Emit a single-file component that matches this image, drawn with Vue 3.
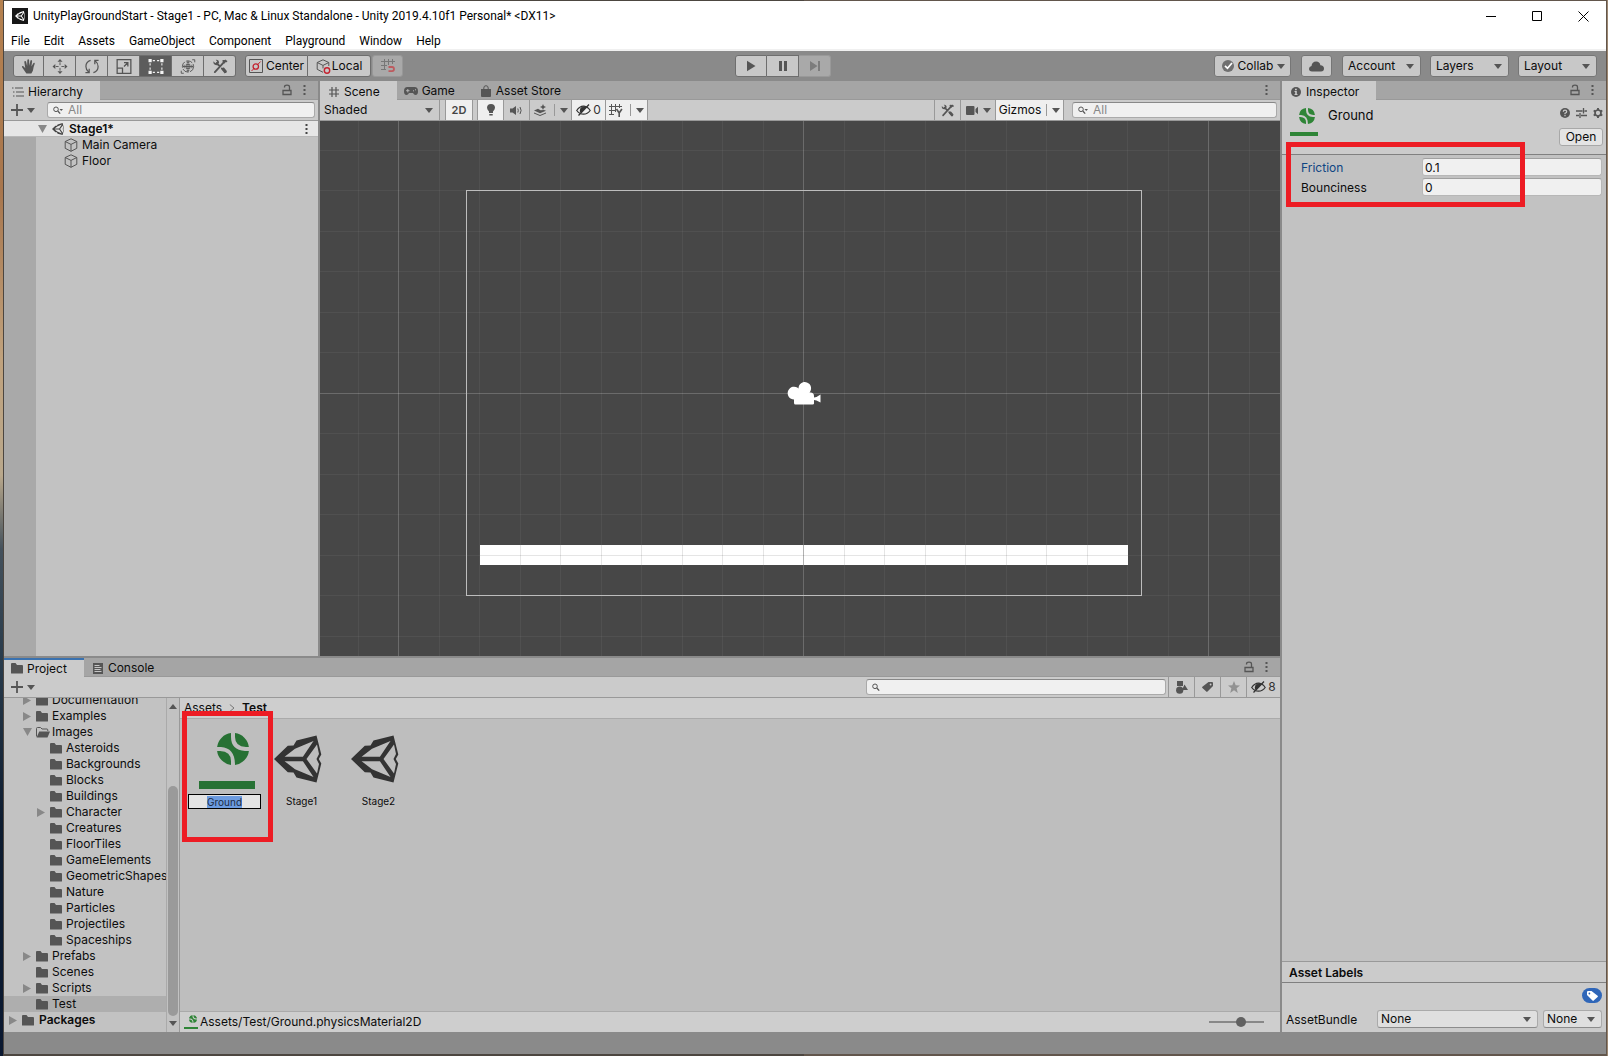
<script setup>
import { onMounted, ref } from 'vue'

const menus = ['File', 'Edit', 'Assets', 'GameObject', 'Component', 'Playground', 'Window', 'Help']

const transformTools = [
  { id: 'hand', label: 'Hand tool' },
  { id: 'move', label: 'Move tool' },
  { id: 'rotate', label: 'Rotate tool' },
  { id: 'scale', label: 'Scale tool' },
  { id: 'rect', label: 'Rect tool', active: true },
  { id: 'transform', label: 'Transform tool' },
  { id: 'tools', label: 'Custom tools' },
]

const tree = [
  { name: 'Documentation', level: 1, fold: 'closed' },
  { name: 'Examples', level: 1, fold: 'closed' },
  { name: 'Images', level: 1, fold: 'open' },
  { name: 'Asteroids', level: 2 },
  { name: 'Backgrounds', level: 2 },
  { name: 'Blocks', level: 2 },
  { name: 'Buildings', level: 2 },
  { name: 'Character', level: 2, fold: 'closed' },
  { name: 'Creatures', level: 2 },
  { name: 'FloorTiles', level: 2 },
  { name: 'GameElements', level: 2 },
  { name: 'GeometricShapes', level: 2 },
  { name: 'Nature', level: 2 },
  { name: 'Particles', level: 2 },
  { name: 'Projectiles', level: 2 },
  { name: 'Spaceships', level: 2 },
  { name: 'Prefabs', level: 1, fold: 'closed' },
  { name: 'Scenes', level: 1 },
  { name: 'Scripts', level: 1, fold: 'closed' },
  { name: 'Test', level: 1, selected: true },
  { name: 'Packages', level: 0, fold: 'closed', bold: true },
]

// Scene grid: one unit is 40.5px, every tenth line is stronger
const unit = 40.5
const center = { x: 483.5, y: 272.5 }
const snap = (v) => Math.floor(v) + 0.5
const range = (from, to) => Array.from({ length: to - from + 1 }, (_, i) => from + i)
const columns = range(-30, 30).map((n) => ({ n, at: snap(center.x + n * unit) }))
const rows = range(-16, 16).map((n) => ({ n, at: snap(center.y + n * unit - 0.5) }))
const floorColumns = range(-7, 7).map((n) => ({ n, at: snap(center.x + n * unit) }))

const assetName = ref('Ground')
const friction = ref('0.1')
const bounciness = ref('0')
const zoom = ref(60)
const renameField = ref(null)

onMounted(() => {
  renameField.value.focus()
  renameField.value.select()
})
</script>

<template>
  <svg class="sprite" aria-hidden="true">
    <symbol id="caret" viewBox="0 0 8 5"><path d="M0 0h8L4 5z" fill="currentColor" /></symbol>
    <symbol id="tri" viewBox="0 0 8 9"><path d="M0 0l8 4.500L0 9z" fill="currentColor" /></symbol>
    <symbol id="folder" viewBox="0 0 12 11"><path d="M0 1q0-1 1-1h3.500l1.500 2h5q1 0 1 1v7q0 .6-.6.6H.6Q0 10.600 0 10z" fill="currentColor" /></symbol>
    <symbol id="folder-open" viewBox="0 0 14 11">
      <path d="M.5 9.500V1.500q0-1 1-1h3l1.500 1.500h5q.8 0 .8 1v1" fill="none" stroke="currentColor" />
      <path d="M3.200 4.500H14L11.500 10.500H.6z" fill="currentColor" />
    </symbol>
    <symbol id="lock" viewBox="0 0 10 12"><path d="M1 6.500h8v4H1zM2.500 3.500V3Q2.500 1.200 5 1.200T7.500 3v3.500" fill="none" stroke="currentColor" stroke-width="1.300" /></symbol>
    <symbol id="dots" viewBox="0 0 3 12"><path d="M.5 1h2v2h-2zM.5 5h2v2h-2zM.5 9h2v2h-2z" fill="currentColor" /></symbol>
    <symbol id="search" viewBox="0 0 10 9">
      <circle cx="3" cy="3.300" r="2.300" fill="none" stroke="currentColor" /><path d="M4.800 5l2.400 2.600" stroke="currentColor" stroke-width="1.300" />
    </symbol>
    <symbol id="search-menu" viewBox="0 0 10 9">
      <circle cx="3" cy="3.300" r="2.300" fill="none" stroke="currentColor" /><path d="M4.800 5l2.400 2.600" stroke="currentColor" stroke-width="1.300" /><path d="M6.500 3H10L8.200 5z" fill="currentColor" />
    </symbol>
    <symbol id="unity" viewBox="0 0 48 48">
      <path d="M42.500.4L22.500 5.500l-3 5.100-5.700.1L0 24l13.800 13.300 5.700.1 3 5.100 20 5.100L47.300 28.500 44.800 24l2.500-4.500zM39.500 6l-10.600 15.800H10.600L21 13.800zM43 9.500L45 19l-2.500 5 2.500 5-2 9.500L32.500 24zM10.600 26.200h18.300L39.500 42 21 34.200z" fill="currentColor" fill-rule="evenodd" />
    </symbol>
    <symbol id="cube" viewBox="0 0 14 14"><path d="M7 .8l5.800 2.700v6.800L7 13.300l-5.800-3V3.500zM1.200 3.500L7 6.400l5.800-2.900M7 6.400v6.900" fill="none" stroke="currentColor" /></symbol>
    <symbol id="eye-off" viewBox="0 0 15 12">
      <path d="M.7 6.500Q4 1.800 8 2.200q3.500.3 6.200 4.300Q11.500 10.200 7.500 10.200T.7 6.500z" fill="none" stroke="currentColor" stroke-width="1.200" />
      <path d="M5 4.500Q6.500 2.500 9 3L5 8.500Q4 6.500 5 4.500zM2.500 11.500L13 .5" fill="currentColor" stroke="currentColor" stroke-width="1.300" />
    </symbol>
    <symbol id="tag" viewBox="0 0 11 10"><path d="M6.500 0H10q1 0 1 1v3L5.500 9.600q-.6.600-1.200 0L.4 6q-.6-.6 0-1.200zM8.600 1.600a.9.9 0 100 1.800.9.9 0 000-1.800z" fill="currentColor" fill-rule="evenodd" /></symbol>
    <symbol id="ball" viewBox="0 0 32 32">
      <path d="M14 .1V4Q14 17 28 18h3.900A16 16 0 0118 31.900Q18 15 4 14H.1A16 16 0 0114 .1zM18 .1A16 16 0 0131.900 14H29Q18 13.500 18 4zM.1 18H3q11 .5 11 10v3.900A16 16 0 01.1 18z" fill="currentColor" />
    </symbol>
    <symbol id="hand" viewBox="0 0 16 16"><path d="M5.200 15.500Q3.500 13 .6 8.800q-.5-1 .4-1.300 1-.2 1.600.7L4 9.800 3 3.200q0-.9.800-1t1.100.8L6 7.500 6.200 1.200q.1-.9 1-.9t.9.9l.2 6L9.500 1.800q.3-.8 1.100-.6t.7 1.100L10.600 8l2-3.600q.5-.7 1.100-.4t.4 1.100Q12.800 8.500 12.500 11t-2 4.500z" fill="currentColor" /></symbol>
    <symbol id="move" viewBox="0 0 16 16">
      <path d="M8 0l2.700 3H5.300zM8 16l2.700-3H5.300zM0 8l3-2.700v5.400zM16 8l-3-2.700v5.400z" fill="currentColor" />
      <path d="M8 3.500v3M8 9.500v3M3.500 8h3M9.500 8h3" stroke="currentColor" />
    </symbol>
    <symbol id="rotate" viewBox="0 0 16 16"><path d="M6.500 1.500Q1.500 3 1.500 8q0 3.500 3 6M5 10.500V14.500H1M9.500 14.500q5-1.500 5-6.500 0-3.500-3-6M11 5.500V1.500h4" fill="none" stroke="currentColor" stroke-width="1.300" /></symbol>
    <symbol id="scale" viewBox="0 0 14 14"><path d="M.6.6h12.800v12.800H.6zM.6 8.500h5v5M7 7l3.500-3.500M7 3.400h3.600V7" fill="none" stroke="currentColor" stroke-width="1.200" /></symbol>
    <symbol id="rect" viewBox="0 0 14 14"><path d="M0 0h3v3H0zM11 0h3v3h-3zM0 11h3v3H0zM11 11h3v3h-3zM4 1h2v1H4zM8 1h2v1H8zM4 12h2v1H4zM8 12h2v1H8zM1 4h1v2H1zM1 8h1v2H1zM12 4h1v2h-1zM12 8h1v2h-1z" fill="currentColor" /></symbol>
    <symbol id="transform" viewBox="0 0 16 16">
      <circle cx="8" cy="8" r="6" fill="none" stroke="currentColor" stroke-dasharray="7 1.500" />
      <path d="M8 2.500v11M2.500 8h11M6.500 4.500L8 2.800l1.500 1.700M6.500 11.500L8 13.200l1.500-1.700M4.500 6.500L2.800 8l1.700 1.500M11.500 6.500L13.200 8l-1.700 1.500M12.500.8h2.700v2.700M.8 12.500v2.700h2.700" fill="none" stroke="currentColor" />
      <path d="M6 6h4v4H6z" fill="none" stroke="currentColor" />
    </symbol>
    <symbol id="tools" viewBox="0 0 16 16">
      <path d="M2.500 14L12 3.500M14.800 2.500L11.500 2M4.500 4.500L8 8M10 10l4 4" stroke="currentColor" stroke-width="2" stroke-linecap="round" />
      <path d="M1 2.500l2 2L5 3 3.500.8Q7 .5 7 4L5 6.500Q.5 7 1 2.500zM11 2.200L14 .5l1 1.500-2.500 3zM9.500 11L12 8.800l3.500 4.200-2.500 2.500z" fill="currentColor" />
    </symbol>
    <symbol id="pivot" viewBox="0 0 14 14"><path d="M.5.5h13v13H.5z" fill="none" stroke="#555" /><circle cx="6.800" cy="7.500" r="2.700" fill="none" stroke="#c4222f" stroke-width="1.300" /><path d="M2.500 12L5 9.500M8.700 5.500l3-3" stroke="#c4222f" /></symbol>
    <symbol id="local" viewBox="0 0 15 15"><path d="M7 .8l5.800 2.700V7M7 13.300l-5.800-3V3.500L7 .8M1.200 3.500L7 6.400l5.800-2.900M7 6.400v3" fill="none" stroke="#555" /><circle cx="11" cy="11.500" r="2.700" fill="none" stroke="#c4222f" stroke-width="1.400" /></symbol>
    <symbol id="snap" viewBox="0 0 14 14"><path d="M3.500 0v11M7.500 0v6M11.500 0v5M0 2.500h14M0 6.500h6M0 10.500h5" stroke="#777" fill="none" /><path d="M7.500 8H11q2 0 2 2t-2 2.200H7.500" fill="none" stroke="#bd5a5e" stroke-width="1.800" /></symbol>
    <symbol id="play" viewBox="0 0 14 12"><path d="M3 0.800l8.500 5.200L3 11.200z" fill="currentColor" /></symbol>
    <symbol id="pause" viewBox="0 0 14 12"><path d="M3 1h3v10H3zM8 1h3v10H8z" fill="currentColor" /></symbol>
    <symbol id="step" viewBox="0 0 14 12"><path d="M2 1l7.500 5L2 11zM10 1h2v10h-2z" fill="currentColor" /></symbol>
    <symbol id="check" viewBox="0 0 12 12"><circle cx="6" cy="6" r="6" fill="#707070" /><path d="M3 5.800l2.500 2.500L10 3" fill="none" stroke="#fff" stroke-width="1.700" /></symbol>
    <symbol id="cloud" viewBox="0 0 15 11"><path d="M3 10.500Q0 10.500 0 7.800 0 5.500 2.500 5 3 .5 7.200.5q3.500 0 4.200 3.700Q15 4.500 15 7.500t-3 3z" fill="currentColor" /></symbol>
    <symbol id="list" viewBox="0 0 12 10"><path d="M3 1h8M4 5h8M4 9h8M0 1h1.500M1 5h1.500M1 9h1.500" stroke="currentColor" stroke-width="1.200" /></symbol>
    <symbol id="plus" viewBox="0 0 12 12"><path d="M6 0v12M0 6h12" stroke="currentColor" stroke-width="1.800" /></symbol>
    <symbol id="grid" viewBox="0 0 10 10"><path d="M3 0v10M7 0v10M0 3h10M0 7h10" stroke="currentColor" stroke-width="1.200" /></symbol>
    <symbol id="gamepad" viewBox="0 0 14 8"><path d="M3.500 0h7Q14 0 14 4.200 14 8 11.500 8 10 8 9 6H5Q4 8 2.500 8 0 8 0 4.200 0 0 3.500 0z" fill="currentColor" /><path d="M3.800 2v3.400M2.100 3.700h3.400M9 3.800h1M11 2.800h1" stroke="#b5b5b5" /></symbol>
    <symbol id="bag" viewBox="0 0 10 12"><path d="M0 4h10v7q0 1-1 1H1q-1 0-1-1z" fill="currentColor" /><path d="M2.800 5.500V3Q2.800.7 5 .7T7.200 3v2.500" fill="none" stroke="currentColor" /></symbol>
    <symbol id="info" viewBox="0 0 10 10"><circle cx="5" cy="5" r="5" fill="currentColor" /><path d="M4 1.800h1.800v1.500H4zM3.500 4h2.300v3H6.500v1h-3V7h.7V5h-.7z" fill="#cbcbcb" /></symbol>
    <symbol id="bulb" viewBox="0 0 8 12"><path d="M4 0q4 0 4 3.800Q8 5.500 6 7.500V9H2V7.500Q0 5.500 0 3.800 0 0 4 0zM2.300 10h3.400v1.500H2.300z" fill="currentColor" /></symbol>
    <symbol id="audio" viewBox="0 0 13 9"><path d="M0 2.500h2.500L6 0v9L2.500 6.500H0z" fill="currentColor" /><path d="M7.800 2.500q1 2 0 4M10 1q2.200 3.500 0 7" fill="none" stroke="currentColor" /></symbol>
    <symbol id="effects" viewBox="0 0 13 12"><path d="M0 6.500L4 4.800l2.500 1.400L10 6l2 .8-6 2.400zM0 8.500l6 2.500 6-2.500v1L6 12 0 9.500zM9 0l.9 2.100L12 3l-2.100.9L9 6l-.9-2.100L6 3l2.100-.9z" fill="currentColor" /></symbol>
    <symbol id="grid-y" viewBox="0 0 14 13"><path d="M2.500 0v11M6.500 0v8M10.500 0v4M0 2.500h13M0 6.500h7M0 10.500h5" stroke="currentColor" /><path d="M7.500 5l2.700 4 2.700-4M10.200 9v4" fill="none" stroke="currentColor" stroke-width="1.600" /></symbol>
    <symbol id="camera" viewBox="0 0 12 9"><path d="M0 1q0-1 1-1h6.500q1 0 1 1v7q0 1-1 1H1Q0 9 0 8zM9.500 3L12 .8v7.400L9.500 6z" fill="currentColor" /></symbol>
    <symbol id="help" viewBox="0 0 10 10"><circle cx="5" cy="5" r="5" fill="currentColor" /><path d="M3.300 3.800Q3.300 2.200 5 2.200t1.700 1.500Q6.700 4.600 5 5.200v1M5 7v1.300" fill="none" stroke="#cbcbcb" stroke-width="1.200" /></symbol>
    <symbol id="presets" viewBox="0 0 11 10"><path d="M0 3h6.500M8.500 3H11M0 7.500h3M5 7.500h6M7.500 0v5.500M4 5v5" stroke="currentColor" stroke-width="1.300" /></symbol>
    <symbol id="gear" viewBox="0 0 10 10"><circle cx="5" cy="5" r="3" fill="none" stroke="currentColor" stroke-width="1.700" /><path d="M5 0v2M5 8v2M0.700 2.500l1.700 1M7.600 6.500l1.700 1M.7 7.500l1.700-1M7.600 3.500l1.700-1" stroke="currentColor" stroke-width="1.900" /></symbol>
    <symbol id="console" viewBox="0 0 10 11"><path d="M0 0h10v11H0z" fill="currentColor" /><path d="M1.500 2.500h5M1.500 4.500h7M1.500 6.500h6M1.500 8.500h7" stroke="#c5c5c5" /></symbol>
    <symbol id="shapes" viewBox="0 0 12 13"><path d="M1 0h6v5H1zM8.500 3.500L12 9H6z" fill="currentColor" /><circle cx="3.700" cy="9.200" r="3.600" fill="currentColor" /></symbol>
    <symbol id="star" viewBox="0 0 12 12"><path d="M6 0l1.700 4.200 4.300.2-3.400 2.800L9.800 12 6 9.300 2.200 12l1.200-4.800L0 4.400l4.300-.2z" fill="currentColor" /></symbol>
    <symbol id="chevron" viewBox="0 0 6 8"><path d="M.8.5L5 4 .8 7.500" fill="none" stroke="currentColor" /></symbol>
  </svg>

  <div class="desktop">
    <div class="window">
      <header class="titlebar">
        <span class="app-icon"><svg width="10" height="10"><use href="#unity" /></svg></span>
        <h1>UnityPlayGroundStart - Stage1 - PC, Mac &amp; Linux Standalone - Unity 2019.4.10f1 Personal* &lt;DX11&gt;</h1>
        <button aria-label="Minimize"><svg width="10" height="11"><path d="M0 5.500h10" stroke="#000" /></svg></button>
        <button aria-label="Maximize"><svg width="10" height="10"><path d="M.5.5h9v9h-9z" fill="none" stroke="#000" /></svg></button>
        <button aria-label="Close"><svg width="11" height="11"><path d="M.5.5l10 10M10.500.5l-10 10" stroke="#000" /></svg></button>
      </header>
      <nav class="menubar"><a v-for="m in menus" :key="m" href="#">{{ m }}</a></nav>

      <div class="toolbar">
        <div class="tool-left">
          <div class="segment transform-tools">
            <button v-for="t in transformTools" :key="t.id" :class="{ active: t.active }" :aria-label="t.label">
              <svg width="16" height="15"><use :href="'#' + t.id" /></svg>
            </button>
          </div>
          <div class="segment pivots">
            <button><svg width="14" height="14"><use href="#pivot" /></svg>Center</button>
            <button><svg width="15" height="15"><use href="#local" /></svg>Local</button>
          </div>
          <button class="snap" aria-label="Grid snapping" disabled><svg width="14" height="14"><use href="#snap" /></svg></button>
        </div>
        <div class="segment playback">
          <button aria-label="Play"><svg width="14" height="12"><use href="#play" /></svg></button>
          <button aria-label="Pause"><svg width="14" height="12"><use href="#pause" /></svg></button>
          <button aria-label="Step" disabled><svg width="14" height="12"><use href="#step" /></svg></button>
        </div>
        <div class="tool-right">
          <button class="bar-button collab"><svg width="12" height="12"><use href="#check" /></svg>Collab<svg class="caret" width="8" height="5"><use href="#caret" /></svg></button>
          <button class="bar-button cloud" aria-label="Services"><svg width="15" height="11"><use href="#cloud" /></svg></button>
          <label v-for="n in ['Account', 'Layers', 'Layout']" :key="n" class="picker bar-picker">
            <select :aria-label="n"><option>{{ n }}</option></select>
            <svg class="caret" width="8" height="5"><use href="#caret" /></svg>
          </label>
        </div>
      </div>

      <div class="workspace">
        <div class="main">
          <div class="upper">
            <section class="panel hierarchy">
              <div class="tabs">
                <button class="tab current"><span class="tab-icon"><svg width="12" height="10"><use href="#list" /></svg></span>Hierarchy</button>
                <span class="tab-tools">
                  <svg width="10" height="12"><use href="#lock" /></svg>
                  <svg width="3" height="12"><use href="#dots" /></svg>
                </span>
              </div>
              <div class="strip">
                <button class="add" aria-label="Create"><svg width="12" height="12"><use href="#plus" /></svg><svg class="caret" width="8" height="5"><use href="#caret" /></svg></button>
                <label class="search"><svg width="10" height="9"><use href="#search-menu" /></svg><input type="text" placeholder="All" aria-label="Search hierarchy"></label>
              </div>
              <div class="scene-row">
                <svg class="fold" width="9" height="8"><path d="M0 0h9L4.500 8z" fill="currentColor" /></svg>
                <svg width="12" height="12"><use href="#unity" /></svg>
                <strong>Stage1*</strong>
                <svg class="row-dots" width="3" height="12"><use href="#dots" /></svg>
              </div>
              <ul class="objects">
                <li v-for="o in ['Main Camera', 'Floor']" :key="o"><svg width="14" height="14"><use href="#cube" /></svg>{{ o }}</li>
              </ul>
            </section>

            <section class="panel scene">
              <div class="tabs">
                <button class="tab current"><span class="tab-icon"><svg width="10" height="10"><use href="#grid" /></svg></span>Scene</button>
                <button class="tab"><span class="tab-icon game-icon"><svg width="14" height="8"><use href="#gamepad" /></svg></span>Game</button>
                <button class="tab"><span class="tab-icon"><svg width="10" height="12"><use href="#bag" /></svg></span>Asset Store</button>
                <span class="tab-tools"><svg width="3" height="12"><use href="#dots" /></svg></span>
              </div>
              <div class="strip scene-strip">
                <label class="picker shading">
                  <select aria-label="Shading mode"><option>Shaded</option></select>
                  <svg class="caret" width="8" height="5"><use href="#caret" /></svg>
                </label>
                <button class="cell on mode">2D</button>
                <div class="cells">
                  <button class="cell on" aria-label="Lighting"><svg width="8" height="12"><use href="#bulb" /></svg></button>
                  <button class="cell" aria-label="Audio"><svg width="13" height="9"><use href="#audio" /></svg></button>
                  <button class="cell wide" aria-label="Effects"><svg width="13" height="12"><use href="#effects" /></svg><i></i><svg class="caret" width="8" height="5"><use href="#caret" /></svg></button>
                  <button class="cell on hidden-count"><svg width="15" height="12"><use href="#eye-off" /></svg>0</button>
                  <button class="cell on wide" aria-label="Grid"><svg width="14" height="13"><use href="#grid-y" /></svg><i></i><svg class="caret" width="8" height="5"><use href="#caret" /></svg></button>
                </div>
                <div class="cells trailing">
                  <button class="cell" aria-label="Component tools"><svg width="13" height="13"><use href="#tools" /></svg></button>
                  <button class="cell camera" aria-label="Scene camera"><svg width="12" height="9"><use href="#camera" /></svg><svg class="caret" width="8" height="5"><use href="#caret" /></svg></button>
                  <button class="cell on gizmos">Gizmos<i></i><svg class="caret" width="8" height="5"><use href="#caret" /></svg></button>
                </div>
                <label class="search"><svg width="10" height="9"><use href="#search-menu" /></svg><input type="text" placeholder="All" aria-label="Search scene"></label>
              </div>
              <div class="viewport">
                <svg viewBox="0 0 960 535" width="100%" height="100%" preserveAspectRatio="xMidYMid slice" shape-rendering="crispEdges">
                  <g stroke="#fff">
                    <line v-for="c in columns" :key="'c' + c.n" :x1="c.at" :x2="c.at" y1="-200" y2="735" :stroke-opacity="c.n % 10 ? 0.05 : 0.2" />
                    <line v-for="r in rows" :key="'r' + r.n" :y1="r.at" :y2="r.at" x1="-500" x2="1460" :stroke-opacity="r.n % 10 ? 0.05 : 0.2" />
                  </g>
                  <rect x="146.500" y="69.500" width="675" height="405" fill="none" stroke="#bdbdbd" />
                  <rect x="160" y="424" width="648" height="20" fill="#fff" />
                  <g stroke="#000">
                    <line v-for="c in floorColumns" :key="'f' + c.n" :x1="c.at" :x2="c.at" y1="424" y2="444" :stroke-opacity="c.n ? 0.1 : 0.3" />
                    <line x1="160" x2="808" y1="434.500" y2="434.500" stroke-opacity="0.1" />
                  </g>
                  <path d="M474 281.500V278.500A6.400 6.400 0 1 1 478.500 267.500A6.300 6.300 0 1 1 489.500 271.500Q494 271 494 275v1.500l2.500-.5 4-2.500v8l-4-2-2.500-.5v3.500q0 1-1.500 1h-17q-1.500 0-1.500-1.500z" fill="#fff" shape-rendering="auto" />
                </svg>
              </div>
            </section>
          </div>

          <section class="panel project">
            <div class="tabs">
              <button class="tab current focused"><span class="tab-icon"><svg width="12" height="11"><use href="#folder" /></svg></span>Project</button>
              <button class="tab"><span class="tab-icon"><svg width="10" height="11"><use href="#console" /></svg></span>Console</button>
              <span class="tab-tools">
                <svg width="10" height="12"><use href="#lock" /></svg>
                <svg width="3" height="12"><use href="#dots" /></svg>
              </span>
            </div>
            <div class="strip project-strip">
              <button class="add" aria-label="Create"><svg width="12" height="12"><use href="#plus" /></svg><svg class="caret" width="8" height="5"><use href="#caret" /></svg></button>
              <label class="search"><svg width="10" height="9"><use href="#search" /></svg><input type="text" aria-label="Search project"></label>
              <div class="cells">
                <button class="cell" aria-label="Search by type"><svg width="12" height="13"><use href="#shapes" /></svg></button>
                <button class="cell" aria-label="Search by label"><svg width="11" height="10"><use href="#tag" /></svg></button>
                <button class="cell faded" aria-label="Save search"><svg width="12" height="12"><use href="#star" /></svg></button>
                <button class="cell hidden-packages"><svg width="15" height="12"><use href="#eye-off" /></svg>8</button>
              </div>
            </div>
            <div class="browser">
              <ul class="tree">
                <li v-for="f in tree" :key="f.name" :class="['level-' + f.level, { selected: f.selected, bold: f.bold }]">
                  <span class="twist">
                    <svg v-if="f.fold === 'closed'" width="8" height="9"><use href="#tri" /></svg>
                    <svg v-else-if="f.fold === 'open'" width="9" height="8"><path d="M0 0h9L4.500 8z" fill="currentColor" /></svg>
                  </span>
                  <svg v-if="f.fold === 'open'" class="folder open" width="14" height="11"><use href="#folder-open" /></svg>
                  <svg v-else class="folder" width="12" height="11"><use href="#folder" /></svg>
                  <span>{{ f.name }}</span>
                </li>
              </ul>
              <div class="scrollbar">
                <svg class="up" width="8" height="5"><use href="#caret" /></svg>
                <span class="track"><span class="thumb"></span></span>
                <svg width="8" height="5"><use href="#caret" /></svg>
              </div>
              <div class="content">
                <div class="crumbs"><a href="#">Assets</a><svg width="6" height="8"><use href="#chevron" /></svg><strong>Test</strong></div>
                <div class="assets">
                  <div class="asset">
                    <div class="thumb-box material">
                      <svg width="32" height="32"><use href="#ball" /></svg>
                      <span class="bar"></span>
                    </div>
                    <input ref="renameField" v-model="assetName" type="text" aria-label="Asset name">
                    <span class="mark"></span>
                  </div>
                  <div v-for="s in ['Stage1', 'Stage2']" :key="s" class="asset">
                    <div class="thumb-box"><svg width="48" height="48"><use href="#unity" /></svg></div>
                    <span class="asset-name">{{ s }}</span>
                  </div>
                </div>
                <div class="pathbar">
                  <span class="mini-material"><svg width="8" height="8"><use href="#ball" /></svg><span class="bar"></span></span>
                  <span>Assets/Test/Ground.physicsMaterial2D</span>
                  <input v-model="zoom" class="slider" type="range" min="0" max="100" aria-label="Icon size">
                </div>
              </div>
            </div>
          </section>
        </div>

        <aside class="panel inspector">
          <div class="tabs">
            <button class="tab current"><span class="tab-icon"><svg width="10" height="10"><use href="#info" /></svg></span>Inspector</button>
            <span class="tab-tools">
              <svg width="10" height="12"><use href="#lock" /></svg>
              <svg width="3" height="12"><use href="#dots" /></svg>
            </span>
          </div>
          <div class="asset-header">
            <span class="badge-material"><svg width="16" height="16"><use href="#ball" /></svg><span class="bar"></span></span>
            <h2>Ground</h2>
            <div class="header-actions">
              <span class="header-icons">
                <svg width="10" height="10"><use href="#help" /></svg>
                <svg width="11" height="10"><use href="#presets" /></svg>
                <svg width="10" height="10"><use href="#gear" /></svg>
              </span>
              <button>Open</button>
            </div>
          </div>
          <div class="properties">
            <div class="property changed"><label for="friction">Friction</label><input id="friction" v-model="friction" type="text"></div>
            <div class="property"><label for="bounciness">Bounciness</label><input id="bounciness" v-model="bounciness" type="text"></div>
            <span class="mark"></span>
          </div>
          <h3>Asset Labels</h3>
          <div class="labels">
            <button class="label-badge" aria-label="Add label"><svg width="11" height="10"><use href="#tag" /></svg></button>
            <div class="bundle">
              <label for="bundle">AssetBundle</label>
              <span class="picker bundle-name"><select id="bundle"><option>None</option></select><svg class="caret" width="8" height="5"><use href="#caret" /></svg></span>
              <span class="picker bundle-variant"><select aria-label="AssetBundle variant"><option>None</option></select><svg class="caret" width="8" height="5"><use href="#caret" /></svg></span>
            </div>
          </div>
        </aside>
      </div>
      <footer class="status"></footer>
    </div>
  </div>
</template>

<style>
body { background: #3c2f28; }
</style>

<style scoped>
* { box-sizing: border-box; margin: 0; padding: 0; }
.sprite { display: none; }
svg { display: block; flex: none; }
ul { list-style: none; }
button, input, select { font: inherit; color: inherit; background: none; border: 0; outline: 0; appearance: none; }
button { display: flex; align-items: center; justify-content: center; white-space: nowrap; }
a { color: inherit; text-decoration: none; }

.desktop {
  min-height: 100vh;
  padding: 1px 2px 2px 4px;
  display: flex;
  background: linear-gradient(90deg, transparent 3px, #4c4640 3px, #4c4640 50%, #62564c 50%, #62564c calc(100% - 1px), #9b8670 calc(100% - 1px)),
    linear-gradient(#b5814f 0, #a8764d 18%, #c0a27d 34%, #b9a88c 45%, #44515c 52%, #2a3c4c 62%, #0d1c30 78%, #0a1830 100%);
  color: #0c0c0c;
  font: 12px/16px Inter, "Liberation Sans", sans-serif;
}
.window { flex: 1; min-width: 0; display: flex; flex-direction: column; background: #8a8a8a; }

.titlebar { height: 30px; display: flex; align-items: center; background: #fff; padding-left: 8px; font: 12px/16px Roboto, sans-serif; color: #000; }
.app-icon { width: 16px; height: 16px; display: grid; place-items: center; background: #171717; color: #fff; margin-right: 5px; }
.titlebar h1 { flex: 1; font-size: 12px; font-weight: 400; }
.titlebar button { width: 46px; height: 28px; }
.menubar { height: 20px; display: flex; gap: 14px; align-items: center; padding: 1px 7px 0; background: #fff; border-bottom: 2px solid #f0f0f0; font: 12px/16px Roboto, sans-serif; color: #000; }

.toolbar { height: 30px; display: grid; grid-template-columns: 1fr 140px 1fr; padding: 4px 9px 0 9px; }
.tool-left, .tool-right, .segment { display: flex; height: 22px; }
.toolbar button, .bar-picker { border: 1px solid #6e6e6e; background: #c8c8c8; color: #555; height: 22px; }
.segment button + button { border-left: 0; }
.segment button:first-child { border-radius: 3px 0 0 3px; }
.segment button:last-child { border-radius: 0 3px 3px 0; }
.transform-tools button { width: 32px; }
.transform-tools button:first-child { width: 31px; }
.toolbar .active { background: #5c5c5c; color: #f4f4f4; }
.toolbar .pivots { margin-left: 9px; }
.toolbar .pivots button, .toolbar .collab { color: #0c0c0c; }
.pivots button { width: 63px; gap: 3px; }
.pivots button:last-child { gap: 1px; }
.toolbar .snap { width: 31px; margin-left: 1px; border-color: #989898; background: #a9a9a9; border-radius: 3px; }
.playback button { width: 32px; }
.toolbar .playback :disabled { color: #7c7c7c; background: #a9a9a9; border-color: #999; }
.tool-right { justify-content: flex-end; gap: 10px; }
.toolbar .bar-button, .bar-picker { border-radius: 3px; border-color: #767676; }
.toolbar .collab { width: 77px; gap: 4px; padding-left: 2px; }
.toolbar .cloud { width: 31px; }
.caret { color: #555; }

.picker { display: grid; align-items: center; }
.picker > * { grid-area: 1 / 1; }
.picker select { width: 100%; padding-left: 5px; color: #0c0c0c; }
.picker .caret { justify-self: end; margin-right: 6px; pointer-events: none; }
.bar-picker { width: 79px; }
.bar-picker + .bar-picker { margin-left: -1px; }

.workspace { flex: 1; display: grid; grid-template-columns: minmax(0, 1fr) 324px; gap: 2px; }
.main { display: flex; flex-direction: column; gap: 2px; min-width: 0; }
.upper { flex: 1; display: grid; grid-template-columns: 314px minmax(0, 1fr); gap: 2px; }
.panel { display: flex; flex-direction: column; min-width: 0; background: #c2c2c2; }

.tabs { height: 19px; display: flex; background: #a5a5a5; border-bottom: 1px solid #999; }
.tab { padding: 2px 17px 0 8px; gap: 4px; height: 18px; }
.tab-icon { width: 12px; display: flex; justify-content: center; color: #555; }
.game-icon { width: 13px; }
.tab.current { height: 19px; background: #cbcbcb; }
.tab.focused { box-shadow: inset 0 2px #3a72b0; padding-left: 7px; }
.tab-tools { margin-left: auto; display: flex; align-items: center; gap: 11px; padding-right: 12px; color: #555; }
.strip { height: 21px; display: flex; align-items: center; background: #cbcbcb; border-bottom: 1px solid #999; }
.add { gap: 4px; margin-left: 7px; color: #555; }
.search { display: flex; align-items: center; gap: 5px; height: 16px; padding: 0 5px; border: 1px solid #aaa; border-top-color: #888; border-radius: 3px; background: #f0f0f0; color: #555; }
.search input { flex: 1; min-width: 0; height: 14px; }
.search input::placeholder { color: #888; opacity: 1; }
.hierarchy .search { flex: 1; margin: 0 3px 0 12px; }

.scene-row { height: 16px; display: flex; align-items: center; gap: 5px; padding: 0 10px 0 34px; background: #e6e6e6; border-bottom: 1px solid #b8b8b8; color: #444; }
.fold { color: #888; }
.scene-row strong { color: #0c0c0c; font-weight: 600; }
.row-dots { margin-left: auto; }
.objects { flex: 1; border-left: 32px solid #a9a9a9; }
.objects li { display: flex; align-items: center; gap: 4px; height: 16px; padding-left: 28px; }
.objects svg { color: #555; }

.scene-strip .shading { width: 120px; height: 20px; border-right: 1px solid #999; }
.scene-strip .shading select { padding-left: 4px; }
.cells { display: flex; border-left: 1px solid #999; }
.cell { width: 26px; height: 20px; border-right: 1px solid #999; color: #555; }
.cell.on { background: #efefef; }
.cell.mode { width: 28px; margin: 0 4px 0 5px; border-left: 1px solid #999; font-weight: 600; font-size: 11px; color: #444; }
.cell i { width: 1px; height: 12px; background: #999; margin: 0 5px 0 7px; }
.cell.wide { width: 42px; }
.cell.hidden-count { width: 34px; color: #333; gap: 2px; }
.trailing { margin-left: auto; }
.cell.camera { width: 35px; gap: 5px; }
.cell.gizmos { width: 68px; color: #0c0c0c; }
.cell.gizmos i { margin: 0 5px; }
.scene-strip .search { width: 205px; margin: 0 3px 0 8px; }
.viewport { flex: 1; position: relative; overflow: hidden; background: #474747; min-height: 240px; }
.viewport svg { position: absolute; inset: 0; }

.project-strip .search { width: 300px; margin: 0 2px 0 auto; }
.cell.faded { color: #929292; }
.cell.hidden-packages { width: 33px; border-right: 0; color: #333; gap: 2px; }
.browser { display: grid; grid-template-columns: 162px 14px minmax(0, 1fr); overflow: hidden; }
.tree { margin-top: -6px; padding-bottom: 4px; }
.tree li { display: flex; align-items: center; height: 16px; overflow: hidden; white-space: nowrap; }
.tree .selected { background: #aeaeae; }
.twist { flex: none; width: 13px; color: #888; }
.folder { margin-right: 4px; color: #555; }
.folder.open { margin-right: 2px; }
.level-0 { padding-left: 5px; }
.level-1 { padding-left: 19px; }
.level-2 { padding-left: 33px; }
.bold { font-weight: 600; }
.bold .folder { margin-right: 5px; }
.scrollbar { display: flex; flex-direction: column; align-items: center; justify-content: space-between; padding: 6px 0; border-left: 1px solid #aaa; border-right: 1px solid #999; color: #555; }
.up { transform: rotate(180deg); }
.track { flex: 1; display: flex; align-items: flex-end; padding: 5px 0; }
.thumb { width: 10px; height: 76%; border-radius: 5px; background: #9a9a9a; }

.content { display: flex; flex-direction: column; background: #bebebe; }
.crumbs { height: 21px; display: flex; align-items: center; gap: 7px; padding-left: 4px; background: #cecece; border-bottom: 1px solid #aaa; }
.crumbs svg { color: #777; }
.crumbs strong { font-weight: 600; }
.assets { flex: 1; display: flex; align-items: flex-start; padding: 14px 6px; }
.asset { position: relative; width: 77px; display: flex; flex-direction: column; align-items: center; font-size: 10px; line-height: 14px; }
.thumb-box { height: 56px; width: 56px; display: flex; padding-top: 2px; color: #333; }
.thumb-box.material { flex-direction: column; align-items: center; padding: 0; margin-left: 4px; color: #277134; }
.material svg { margin-left: 12px; }
.bar { display: block; background: currentColor; }
.material .bar { width: 56px; height: 8px; margin-top: 16px; }
.asset input { width: 73px; height: 15px; margin-top: 5px; padding: 0; border: 1px solid #000; background: #e4e4e4; text-align: center; }
.asset input::selection { background: #6c9bdf; color: #1c2b44; }
.asset-name { margin-top: 5px; }
.mark { position: absolute; border: 5px solid #ed1c24; pointer-events: none; }
.asset .mark { top: -22px; left: -4px; width: 91px; height: 131px; z-index: 1; }
.pathbar { height: 21px; display: flex; align-items: center; gap: 2px; padding: 0 16px 0 4px; border-top: 1px solid #aaa; background: #cecece; }
.mini-material { width: 14px; display: flex; flex-direction: column; align-items: center; gap: 4px; color: #2f8537; }
.mini-material svg { margin-left: 3px; }
.mini-material .bar { width: 14px; height: 2px; }
.slider { width: 55px; height: 12px; margin-left: auto; background: linear-gradient(#888, #888) center / 100% 2px no-repeat; }
.slider::-webkit-slider-thumb { appearance: none; width: 10px; height: 10px; border-radius: 50%; background: #616161; }

.asset-header { height: 55px; display: flex; padding: 8px 3px 0 8px; background: #cbcbcb; border-bottom: 1px solid #808080; }
.badge-material { width: 28px; display: flex; flex-direction: column; align-items: center; color: #2f8537; }
.badge-material svg { margin-left: 6px; }
.badge-material .bar { width: 28px; height: 4px; margin-top: 8px; }
h2 { flex: 1; font-size: 13px; line-height: 14px; font-weight: 400; margin-left: 10px; }
.header-actions { display: flex; flex-direction: column; align-items: flex-end; gap: 10px; color: #555; }
.header-icons { display: flex; gap: 6px; }
.header-actions button { width: 44px; height: 18px; border: 1px solid #a8a8a8; border-radius: 3px; background: #e4e4e4; color: #0c0c0c; }
.properties { position: relative; flex: 1; padding: 3px 4px 0 19px; display: flex; flex-direction: column; gap: 2px; }
.property { display: grid; grid-template-columns: 121px 1fr; align-items: center; }
.property label { padding-top: 2px; }
.property input { min-width: 0; height: 18px; padding: 0 2px; border: 1px solid #b7b7b7; border-top-color: #a0a0a0; border-radius: 3px; background: #f0f0f0; }
.changed label { color: #0f4582; }
.properties .mark { left: 4px; top: -13px; width: 239px; height: 65px; }
h3 { height: 22px; padding-left: 7px; font-size: 12px; line-height: 22px; font-weight: 600; background: #cbcbcb; border-top: 1px solid #999; border-bottom: 1px solid #808080; }
.labels { display: flex; flex-direction: column; gap: 7px; padding: 5px 4px 4px; background: #cbcbcb; }
.label-badge { align-self: flex-end; width: 20px; height: 15px; border-radius: 8px; background: #2f66b8; color: #fff; }
.label-badge svg { transform: scaleX(-1); }
.bundle { display: flex; align-items: center; }
.bundle label { width: 91px; padding-top: 2px; }
.bundle .picker { height: 18px; border: 1px solid #aaa; border-bottom-color: #8c8c8c; border-radius: 3px; background: #dfdfdf; }
.bundle .picker select { padding-left: 3px; }
.bundle-name { flex: 1; margin-right: 5px; }
.bundle-variant { width: 59px; }
.status { height: 22px; background: #8a8a8a; }
</style>
